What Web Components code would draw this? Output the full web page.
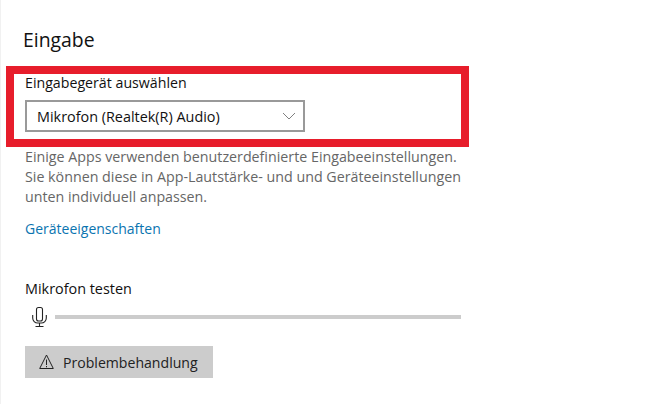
<!DOCTYPE html>
<html lang="de"><head><meta charset="utf-8"><title>Eingabe</title>
<style>
html,body{margin:0;background:#fff;height:404px;overflow:hidden}
body{font-family:"Open Sans","Noto Sans",sans-serif;color:#000}
</style></head><body>
<sound-input-page>
  <settings-heading slot="heading">Eingabe</settings-heading>
  <device-select slot="select" label="Eingabegerät auswählen" value="Mikrofon (Realtek(R) Audio)"></device-select>
  <span slot="help">Einige Apps verwenden benutzerdefinierte Eingabeeinstellungen.<br>Sie können diese in App-Lautstärke- und und Geräteeinstellungen<br>unten individuell anpassen.</span>
  <settings-link slot="link">Geräteeigenschaften</settings-link>
  <mic-test slot="test" label="Mikrofon testen"></mic-test>
  <trouble-button slot="button">Problembehandlung</trouble-button>
</sound-input-page>
<script>
function def(name,html){
  customElements.define(name,class extends HTMLElement{
    connectedCallback(){
      if(this.shadowRoot)return;
      const r=this.attachShadow({mode:'open'});
      r.innerHTML=typeof html==='function'?html(this):html;
    }
  });
}
def('sound-input-page',`<style>
:host{display:block;position:relative;width:665px;height:404px;box-sizing:border-box;padding:28px 0 0 25px;border-left:1px solid #f1f1f1;margin:0}
.wrap{margin-left:-1px;display:flex;flex-direction:column;align-items:flex-start}
.help{margin-top:15px;font-size:14.25px;line-height:20px;color:#666;white-space:nowrap}
.link{margin-top:12px}
.test{margin-top:40px}
.btn{margin-top:18px}
.mark{position:absolute;left:5px;top:66px;width:463px;height:81px;box-sizing:border-box;border:8px solid #e71d2b;pointer-events:none}
</style><div class="wrap"><slot name="heading"></slot><slot name="select"></slot><div class="help"><slot name="help"></slot></div><div class="link"><slot name="link"></slot></div><div class="test"><slot name="test"></slot></div><div class="btn"><slot name="button"></slot></div></div><div class="mark"></div>`);
def('settings-heading',`<style>:host{display:block;margin-left:-2px;font-size:19.4px;line-height:24px;color:#111;white-space:nowrap}</style><slot></slot>`);
def('device-select',h=>`<style>
:host{display:block;margin-top:21px}
.l{font-size:14.2px;line-height:20px;color:#111;white-space:nowrap}
.b{margin-top:7px;width:280px;height:32px;box-sizing:border-box;border:2px solid #999;display:flex;align-items:center;justify-content:space-between;padding:0 7px 0 10px;font-size:14.4px;color:#111;white-space:nowrap}
svg{display:block}
</style><div class="l">${h.getAttribute('label')}</div><div class="b"><span>${h.getAttribute('value')}</span><svg width="14" height="8" viewBox="0 0 14 8"><path d="M1 1l6 6 6-6" fill="none" stroke="#808080" stroke-width="1"/></svg></div>`);
def('settings-link',`<style>:host{display:block;font-size:14px;line-height:20px;color:#0a74b0;white-space:nowrap}</style><slot></slot>`);
def('mic-test',h=>`<style>
:host{display:block}
.l{font-size:14.4px;line-height:20px;color:#111;white-space:nowrap}
.r{display:flex;align-items:center;margin-top:7px;height:22px}
svg{display:block;margin-left:7px}
.t{margin-left:8px;width:406px;height:4px;background:#ccc}
</style><div class="l">${h.getAttribute('label')}</div><div class="r"><svg width="15" height="22" viewBox="0 0 15 22" fill="none" stroke="#222" stroke-width="1.1"><rect x="4.5" y="1.5" width="6" height="13.5" rx="2"/><path d="M.7 9v3a5 5 0 0 0 5 5h3.6a5 5 0 0 0 5-5V9M7.5 17v3.5M3.5 20.5h8"/></svg><div class="t"></div></div>`);
def('trouble-button',`<style>
:host{display:flex;align-items:center;width:188px;height:32px;box-sizing:border-box;padding-left:14px;background:#ccc;font-size:14.1px;color:#222;white-space:nowrap}
svg{display:block;margin-right:9px}
</style><svg width="15" height="16" viewBox="0 0 15 16" fill="none" stroke="#222" stroke-width="1"><path d="M7.5 1L14.3 14.5H.7Z"/><path d="M7.5 5.5v5.5M7.5 12v1.3"/></svg><slot></slot>`);
</script>
</body></html>
